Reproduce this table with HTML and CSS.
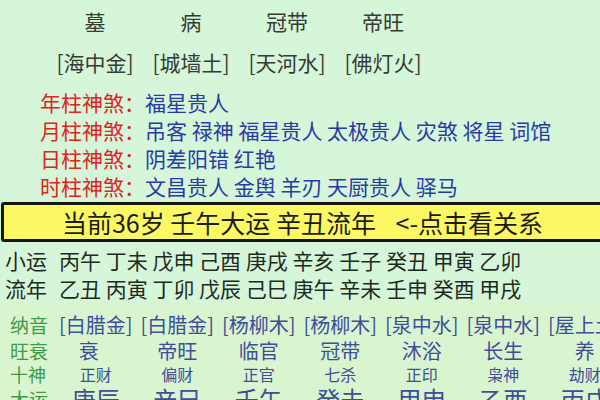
FILE: index.html
```html
<!DOCTYPE html>
<html lang="zh-CN">
<head>
<meta charset="utf-8">
<title>八字排盘</title>
<link rel="stylesheet" href="styles.css">
</head>
<body>
<div class="page">
  <div class="cols4 zhangsheng">
    <span>墓</span><span>病</span><span>冠带</span><span>帝旺</span>
  </div>
  <div class="cols4 nayin-top">
    <span>[海中金]</span><span>[城墙土]</span><span>[天河水]</span><span>[佛灯火]</span>
  </div>
  <div class="shensha">
    <div class="ss-line"><span class="ss-label">年柱神煞：</span><span class="ss-val">福星贵人</span></div>
    <div class="ss-line"><span class="ss-label">月柱神煞：</span><span class="ss-val">吊客 禄神 福星贵人 太极贵人 灾煞 将星 词馆</span></div>
    <div class="ss-line"><span class="ss-label">日柱神煞：</span><span class="ss-val">阴差阳错 红艳</span></div>
    <div class="ss-line"><span class="ss-label">时柱神煞：</span><span class="ss-val">文昌贵人 金舆 羊刃 天厨贵人 驿马</span></div>
  </div>
  <div class="bar">当前36岁 壬午大运 辛丑流年 <span class="gap"></span>&lt;-点击看关系</div>
  <div class="yun">
    <div class="yun-line"><span class="yun-label">小运</span>丙午 丁未 戊申 己酉 庚戌 辛亥 壬子 癸丑 甲寅 乙卯</div>
    <div class="yun-line"><span class="yun-label">流年</span>乙丑 丙寅 丁卯 戊辰 己巳 庚午 辛未 壬申 癸酉 甲戌</div>
  </div>
  <div class="dayun">
    <div class="dy-row r-nayin">
      <span class="dy-label">纳音</span>
      <span>[白腊金]</span><span>[白腊金]</span><span>[杨柳木]</span><span>[杨柳木]</span><span>[泉中水]</span><span>[泉中水]</span><span>[屋上土]</span>
    </div>
    <div class="dy-row r-ws">
      <span class="dy-label">旺衰</span>
      <span class="shift">衰</span><span>帝旺</span><span>临官</span><span>冠带</span><span>沐浴</span><span>长生</span><span>养</span>
    </div>
    <div class="dy-row r-ss">
      <span class="dy-label">十神</span>
      <span>正财</span><span>偏财</span><span>正官</span><span>七杀</span><span>正印</span><span>枭神</span><span>劫财</span>
    </div>
    <div class="dy-row r-gz">
      <span class="dy-label">大运</span>
      <span>庚辰</span><span>辛巳</span><span>壬午</span><span>癸未</span><span>甲申</span><span>乙酉</span><span>丙戌</span>
    </div>
  </div>
</div>
</body>
</html>
```

FILE: styles.css
```css
html, body {
  margin: 0;
  padding: 0;
}
body {
  width: 600px;
  height: 400px;
  overflow: hidden;
  background: #d5f6d8;
  font-family: "Noto Sans CJK SC", "Noto Sans", sans-serif;
}
.page {
  width: 600px;
  height: 400px;
  overflow: hidden;
}
.cols4 {
  display: grid;
  grid-template-columns: repeat(4, 96px);
  padding-left: 47px;
  font-size: 21px;
  line-height: 28px;
  color: #363b36;
  text-align: center;
  white-space: nowrap;
}
.zhangsheng {
  padding-top: 7px;
}
.nayin-top {
  margin-top: 13px;
}
.shensha {
  margin-top: 12px;
  padding-left: 40px;
  font-size: 21px;
  line-height: 28px;
  white-space: nowrap;
}
.ss-label {
  color: #e0231f;
}
.ss-val {
  color: #2a3aa6;
}
.bar {
  margin-top: 2px;
  margin-left: 1px;
  margin-right: -6px;
  height: 34px;
  border: 3px solid #151515;
  border-radius: 3px;
  background: #fbf864;
  color: #1c1c14;
  font-size: 25px;
  line-height: 34px;
  text-align: center;
  padding-right: 2px;
  white-space: nowrap;
}
.gap {
  display: inline-block;
  width: 14px;
}
.yun {
  margin-top: 4px;
  padding-left: 5px;
  font-size: 21px;
  line-height: 28px;
  color: #1f2a1f;
  white-space: nowrap;
}
.yun-label {
  display: inline-block;
  width: 54px;
}
.dayun {
  padding-top: 10px;
  background: #d8f5d0;
  height: 120px;
  overflow: hidden;
}
.dy-row {
  display: grid;
  grid-template-columns: 45px repeat(7, 81.5px);
  padding-left: 10px;
  white-space: nowrap;
  color: #3e4e98;
  text-align: center;
}
.dy-label {
  text-align: left;
  color: #3f9b45;
  font-size: 19px;
}
.r-nayin {
  font-size: 20px;
  line-height: 26px;
}
.r-ws {
  font-size: 20px;
  line-height: 26px;
}
.shift {
  padding-right: 14px;
}
.r-ss {
  font-size: 16px;
  line-height: 20px;
}
.r-ss .dy-label {
  font-size: 18px;
}
.r-gz {
  font-size: 24px;
  line-height: 30px;
}
.r-gz .dy-label {
  font-size: 19px;
}
```
